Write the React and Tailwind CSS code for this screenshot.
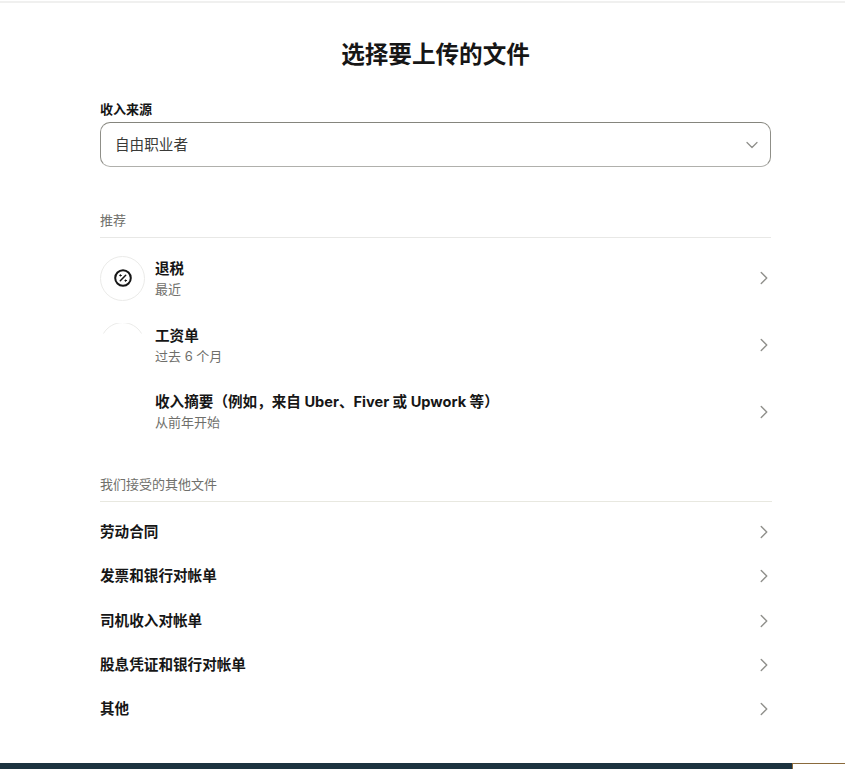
import { ChevronRight, ChevronDown } from "lucide-react";

const font = { fontFamily: 'Inter, "Noto Sans CJK SC", sans-serif' };

function Chevron() {
  return <ChevronRight className="w-[22px] h-[22px] -mr-[6px] text-[#8f8f8b] shrink-0" strokeWidth={1.5} />;
}

function PercentBadge() {
  return (
    <div className="w-[45px] h-[45px] rounded-full border border-[#ebebe9] flex items-center justify-center shrink-0">
      <svg width="18" height="18" viewBox="0 0 18 18" fill="none" stroke="#161616" strokeWidth="2" strokeLinecap="round">
        <circle cx="9" cy="9" r="7.8" />
        <path d="M11.7 6.3 6.3 11.7" strokeWidth="1.5" />
        <circle cx="6.4" cy="6.4" r="0.7" fill="#161616" strokeWidth="1" />
        <circle cx="11.6" cy="11.6" r="0.7" fill="#161616" strokeWidth="1" />
      </svg>
    </div>
  );
}

function ArcBadge() {
  return (
    <div className="w-[45px] h-[45px] shrink-0">
      <svg width="45" height="45" viewBox="0 0 45 45" fill="none" stroke="#ebebe9">
        <path d="M3.5 10.5A22 22 0 0 1 41.5 10.5" />
      </svg>
    </div>
  );
}

function Recommended({ badge, title, sub }) {
  return (
    <div className="h-[66.7px] flex items-center gap-[10px] pr-[2px]">
      {badge}
      <div className="flex-1 flex flex-col gap-[2px]">
        <div className="text-[14.6px] leading-[20px] font-bold text-[#161616]">{title}</div>
        <div className="text-[13px] leading-[17px] text-[#6f6f6b]">{sub}</div>
      </div>
      <Chevron />
    </div>
  );
}

function Other({ title }) {
  return (
    <div className="h-[44.4px] flex items-center justify-between pr-[2px]">
      <span className="text-[14.6px] leading-[20px] font-bold text-[#161616]">{title}</span>
      <Chevron />
    </div>
  );
}

export default function App() {
  return (
    <div style={font} className="h-[769px] bg-white flex flex-col overflow-hidden">
      <div className="h-[3px] border-b-2 border-[#f0f0ef]" />
      <main className="flex-1 pl-[100px] pr-[74px]">
        <h1 className="mt-[37px] text-[23.6px] leading-[30px] font-bold text-[#161616] text-center">选择要上传的文件</h1>
        <label className="block mt-[30px] text-[13px] leading-[18px] font-bold text-[#161616]">收入来源</label>
        <div className="mt-[4px] h-[45px] rounded-[10px] border border-t-[#85857d] border-x-[#8f8f88] border-b-[#b0b0ac] flex items-center justify-between pl-[14px] pr-[8px]">
          <span className="text-[14.6px] leading-[20px] pt-[1px] text-[#3a3a38]">自由职业者</span>
          <ChevronDown className="w-[20px] h-[20px] text-[#8f8f8b]" strokeWidth={1.5} />
        </div>
        <div className="mt-[45px] pb-[8px] border-b border-[#e8e8e6] text-[13px] leading-[17px] text-[#6f6f6b]">推荐</div>
        <div className="mt-[7px]">
          <Recommended badge={<PercentBadge />} title="退税" sub="最近" />
          <Recommended badge={<ArcBadge />} title="工资单" sub="过去 6 个月" />
          <Recommended badge={<div className="w-[45px] h-[45px] shrink-0" />} title="收入摘要（例如，来自 Uber、Fiver 或 Upwork 等）" sub="从前年开始" />
        </div>
        <div className="mt-[31px] pb-[8px] -mr-[1px] border-b border-[#e8e8e0] text-[13px] leading-[17px] text-[#6f6f6b]">我们接受的其他文件</div>
        <div className="mt-[7.5px]">
          <Other title="劳动合同" />
          <Other title="发票和银行对帐单" />
          <Other title="司机收入对帐单" />
          <Other title="股息凭证和银行对帐单" />
          <Other title="其他" />
        </div>
      </main>
      <footer className="h-[6px] flex shrink-0">
        <div className="w-[792px] bg-[#1d3340]" />
        <div className="flex-1 bg-white border-t border-l border-[#8a6a3c]" />
      </footer>
    </div>
  );
}
